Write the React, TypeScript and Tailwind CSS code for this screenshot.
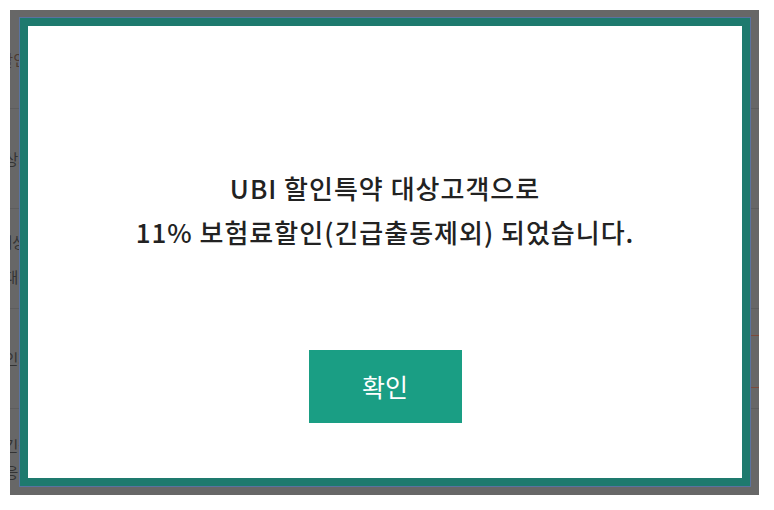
import React from "react";

const FONT = '"Noto Sans CJK KR", "Noto Sans", sans-serif';

function Row({ left, right }: { left: React.ReactNode; right?: React.ReactNode }) {
  return (
    <div className="h-[100px] border-b border-[#5d5d5d] flex items-stretch justify-between shrink-0 first:h-[99px]">
      <div className="w-[22px] flex flex-col justify-center items-end whitespace-nowrap text-[15px] leading-[35px] text-[#333]">
        {left}
      </div>
      <div className="w-[30px] flex items-center justify-start">{right}</div>
    </div>
  );
}

export default function App() {
  return (
    <div className="w-[774px] h-[510px] bg-white p-[10px]" style={{ fontFamily: FONT }}>
      <div className="relative w-[749px] h-[485px] bg-[#676767] overflow-hidden">
        {/* dimmed page underneath */}
        <div className="flex flex-col">
          <Row left={<span className="text-[#4a3a30]">할인]</span>} />
          <Row left={<span>대상자</span>} />
          <Row
            left={
              <>
                <span className="leading-[35px]">대상/</span>
                <span className="leading-[35px]">비대상</span>
              </>
            }
          />
          <Row
            left={<span>확인자</span>}
            right={
              <div className="mt-[6px] h-[53px] w-full border-y border-[#7d4a3a] flex items-center pl-[1px] text-[15px] text-[#6a5040]">
                가
              </div>
            }
          />
          <Row
            left={
              <>
                <span className="leading-[26px]">긴급</span>
                <span className="leading-[26px]">응답</span>
              </>
            }
          />
        </div>

        {/* modal overlay */}
        <div className="absolute left-[10px] top-[8px] w-[730px] h-[468px] border-[8px] border-[#1e7a6e] bg-white outline outline-1 outline-[#5a72a0] flex flex-col items-center">
          <div className="mt-[140px] text-center text-[26px] leading-[44px] tracking-[1px] font-medium text-[#222]">
            <p>UBI 할인특약 대상고객으로</p>
            <p>11% 보험료할인(긴급출동제외) 되었습니다.</p>
          </div>
          <button className="mt-[96px] w-[153px] h-[73px] bg-[#1a9e84] text-white text-[25px] font-normal">
            확인
          </button>
        </div>
      </div>
    </div>
  );
}
